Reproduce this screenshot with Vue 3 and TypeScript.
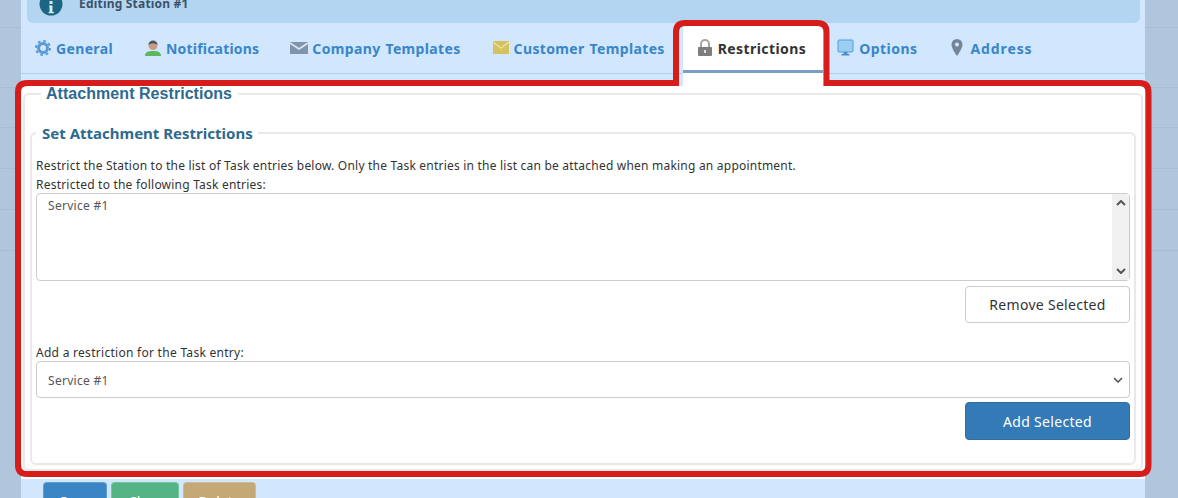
<template>
  <div class="page">
    <div class="panel">
      <div class="info-bar">
        <svg class="info-icon" width="24" height="24" viewBox="0 0 24 24">
          <circle cx="12" cy="12" r="11.500" fill="#1c6684" />
          <path d="M10 13.500h3.500V20H15v1.200H9.500V20h1v-5.300H10z" fill="#d6e8f2" />
          <rect x="10.500" y="9" width="3" height="3" fill="#d6e8f2" />
        </svg>
        <strong>Editing Station #1</strong>
      </div>

      <nav class="tabs">
        <a
          v-for="tab in tabs"
          :key="tab.label"
          class="tab"
          :class="{ 'tab--active': tab.active }"
          :style="{ letterSpacing: tab.spacing + 'px' }"
        >
          <svg class="tab-icon" width="18" height="18" viewBox="0 0 18 18" v-html="tab.icon"></svg>
          {{ tab.label }}
        </a>
      </nav>

      <section class="content">
        <fieldset class="outer">
          <legend>Attachment Restrictions</legend>
          <fieldset class="inner">
            <legend>Set Attachment Restrictions</legend>
            <p class="line">Restrict the Station to the list of Task entries below. Only the Task entries in the list can be attached when making an appointment.</p>
            <p class="line line--tight">Restricted to the following Task entries:</p>
            <div class="listbox">
              <span class="value">Service #1</span>
              <div class="scrollbar">
                <svg width="10" height="6" viewBox="0 0 10 6"><path d="M1 5l4-4 4 4" fill="none" stroke="#555" stroke-width="2" /></svg>
                <svg width="10" height="6" viewBox="0 0 10 6"><path d="M1 1l4 4 4-4" fill="none" stroke="#555" stroke-width="2" /></svg>
              </div>
            </div>
            <div class="actions"><button class="btn">Remove Selected</button></div>
            <p class="line line--add line--tight">Add a restriction for the Task entry:</p>
            <div class="select">
              <span class="value">Service #1</span>
              <svg width="10" height="6" viewBox="0 0 10 6"><path d="M1 1l4 4 4-4" fill="none" stroke="#555" stroke-width="1.6" /></svg>
            </div>
            <div class="actions actions--add"><button class="btn btn--primary">Add Selected</button></div>
          </fieldset>
        </fieldset>
      </section>

      <div class="footer">
        <button class="foot-btn foot-btn--save">Save</button>
        <button class="foot-btn foot-btn--clear">Clear</button>
        <button class="foot-btn foot-btn--delete">Delete</button>
      </div>
    </div>

    <!-- annotation drawn on top of the screenshot -->
    <svg class="annotation" width="1178" height="498" viewBox="0 0 1178 498">
      <path
        d="M18 92 Q18 83 27 83 H676 V32 Q676 23 685 23 H817.500 Q826.500 23 826.500 32 V83 H1139.500 Q1148.500 83 1148.500 92 V465 Q1148.500 474 1139.500 474 H27 Q18 474 18 465 Z"
        fill="none"
        stroke="#d71c1c"
        stroke-width="6"
      />
    </svg>
  </div>
</template>

<script setup lang="ts">
interface Tab {
  label: string;
  icon: string;
  // the source font runs a little wider on some labels
  spacing: number;
  active?: boolean;
}

const tabs: Tab[] = [
  {
    label: "General",
    spacing: 0.35,
    icon: '<circle cx="9" cy="9" r="4.500" fill="none" stroke="#5b9bd5" stroke-width="3"/><circle cx="9" cy="9" r="7" fill="none" stroke="#5b9bd5" stroke-width="2" stroke-dasharray="2.750 2.750"/>',
  },
  {
    label: "Notifications",
    spacing: 0.2,
    icon: '<path d="M1 17c0-4 3-5 8-5s8 1 8 5z" fill="#5cb85c"/><circle cx="9" cy="6.500" r="4.500" fill="#c99a84"/><path d="M4.500 6c0-6 9-6 9 0-2-2-7-2-9 0z" fill="#4a5a62"/>',
  },
  {
    label: "Company Templates",
    spacing: 0.35,
    icon: '<path d="M0 3h18v12H0z" fill="#7f95ab"/><path d="M0 4l9 6 9-6" fill="none" stroke="#dfe8f0" stroke-width="1.600"/>',
  },
  {
    label: "Customer Templates",
    spacing: 0.35,
    icon: '<path d="M1 2h16v13H1z" fill="#d6c060"/><path d="M1 3l8 6 8-6" fill="none" stroke="#ecdf9c" stroke-width="1.400"/>',
  },
  {
    label: "Restrictions",
    active: true,
    spacing: 0.42,
    icon: '<rect x="2" y="8" width="14" height="9" rx="1" fill="#7d7d7d"/><path d="M5 8V5a4 4 0 0 1 8 0v3" fill="none" stroke="#a5a5a5" stroke-width="2"/><rect x="8" y="11" width="2" height="3" fill="#ddd"/>',
  },
  {
    label: "Options",
    spacing: 0.45,
    icon: '<rect x="1" y="1" width="15" height="12" rx="1" fill="#9ccdf2" stroke="#5b9bd5"/><path d="M6.500 13h4v2h2v1.500h-8V15h2z" fill="#4f8fc9"/>',
  },
  {
    label: "Address",
    spacing: 0.9,
    icon: '<path d="M9 0a5.500 5.500 0 0 0-5.500 5.500C3.500 9.500 9 17 9 17s5.500-7.500 5.500-11.500A5.500 5.500 0 0 0 9 0z" fill="#74859a"/><circle cx="9" cy="5.500" r="2" fill="#d0e7fd"/>',
  },
];
</script>

<style scoped>
.page {
  position: relative;
  width: 1178px;
  height: 498px;
  overflow: hidden;
  font-family: "Noto Sans", sans-serif;
  background-color: #afc6dc;
  background-image:
    linear-gradient(#a6bdd5, #a6bdd5), linear-gradient(#a6bdd5, #a6bdd5),
    linear-gradient(#a6bdd5, #a6bdd5), linear-gradient(#a6bdd5, #a6bdd5),
    linear-gradient(#a6bdd5, #a6bdd5), linear-gradient(#a6bdd5, #a6bdd5);
  background-repeat: no-repeat;
  background-size: 100% 1px;
  background-position: 0 27px, 0 87px, 0 127px, 0 168px, 0 209px, 0 250px;
}
.panel {
  width: 1124px;
  height: 498px;
  margin-left: 21px;
  background: #d0e7fd;
  overflow: hidden;
}
.info-bar {
  display: flex;
  align-items: center;
  gap: 16px;
  height: 23px;
  margin: 0 5px 0 6px;
  padding-left: 12px;
  background: #b3d5f2;
  border-radius: 0 0 6px 6px;
  overflow: hidden;
  font-size: 12px;
  letter-spacing: 0.2px;
  color: #3c5268;
}
.info-icon {
  flex: none;
  margin-top: -16px;
}
.info-bar strong {
  margin-top: -16px;
}
.tabs {
  display: flex;
  height: 51px;
  border-bottom: 1px solid #b5cfe6;
  box-sizing: border-box;
}
.tab {
  position: relative;
  display: flex;
  align-items: center;
  gap: 4px;
  padding: 0 13px;
  margin-right: 5px;
  font-size: 14px;
  font-weight: 700;
  word-spacing: 1px;
  color: #3a85c9;
}
.tab--active {
  height: 50px;
  padding: 3px 17px 0 13px;
  margin-right: 1px;
  background: #fff;
  color: #333;
  border-bottom: 3px solid #7a9fc6;
  box-sizing: border-box;
}
/* joins the active tab to the white content below it */
.tab--active::after {
  content: "";
  position: absolute;
  left: 0;
  right: 0;
  top: 50px;
  height: 13px;
  background: #fff;
}
.tab-icon {
  flex: none;
}
.content {
  height: 393px;
  margin: 12px 0 0;
  padding: 0 2px;
  background: #fff;
  box-sizing: border-box;
}
fieldset {
  margin: 0;
  min-width: 0;
  box-sizing: border-box;
  border: 2px solid #e9e9e9;
  border-radius: 6px;
}
.outer {
  height: 386px;
  padding: 20px 5px 4px;
  position: relative;
  top: -1px;
}
.outer > legend {
  margin-left: 11px;
  padding: 0 6px 0 5px;
  font: 700 16px "Liberation Sans", sans-serif;
  letter-spacing: 0.05px;
  color: #2e6a90;
}
.inner {
  height: 342px;
  padding: 13px 4px 0 4px;
}
.inner > legend {
  padding: 0 5px 0 6px;
  font-size: 15px;
  font-weight: 700;
  color: #2e6a90;
}
.line {
  margin: 0;
  font-size: 12px;
  line-height: 19px;
  letter-spacing: 0.215px;
  color: #333;
}
.line--tight {
  margin-bottom: -1px;
}
.listbox,
.select {
  display: flex;
  box-sizing: border-box;
  border: 1px solid #ccc;
  border-radius: 4px;
  background: #fff;
}
.listbox {
  height: 88px;
  justify-content: space-between;
}
.value {
  padding: 3px 0 0 11px;
  font-size: 12px;
  letter-spacing: 0.3px;
  color: #555;
}
.scrollbar {
  display: flex;
  flex-direction: column;
  justify-content: space-between;
  align-items: center;
  width: 17px;
  padding: 6px 0;
  box-sizing: border-box;
  background: #f0f0f0;
}
.actions {
  display: flex;
  justify-content: flex-end;
  margin-top: 5px;
}
.actions--add {
  margin-top: 4px;
}
.line--add {
  margin-top: 20px;
  letter-spacing: 0.28px;
}
.select {
  height: 37px;
  align-items: center;
  justify-content: space-between;
  padding-right: 6px;
}
.select .value {
  padding-top: 2px;
}
.btn {
  width: 165px;
  height: 37px;
  border: 1px solid #ccc;
  border-radius: 4px;
  background: #fff;
  font: 14px "Noto Sans", sans-serif;
  letter-spacing: 0.3px;
  color: #333;
}
.btn--primary {
  height: 38px;
  border-color: #2e6da4;
  background: #337ab7;
  color: #fff;
}
.footer {
  display: flex;
  gap: 4px;
  margin: 3px 0 0 22px;
}
.foot-btn {
  height: 34px;
  border: 1px solid rgba(255, 255, 255, 0.2);
  border-radius: 4px;
  padding: 5px 0 0;
  font: 14px "Noto Sans", sans-serif;
  color: #fff;
}
.foot-btn--save {
  width: 64px;
  background: #3a85c6;
}
.foot-btn--clear {
  width: 68px;
  background: #55b485;
}
.foot-btn--delete {
  width: 73px;
  background: #c4a976;
}
.annotation {
  position: absolute;
  inset: 0;
  pointer-events: none;
}
</style>
